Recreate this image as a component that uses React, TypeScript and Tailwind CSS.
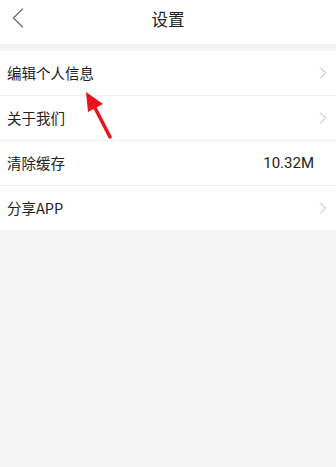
import { ChevronLeft, ChevronRight } from "lucide-react";

const font = { fontFamily: '"Noto Sans CJK SC", "Noto Sans", sans-serif' };

const rows = [
  { label: "编辑个人信息", arrow: true },
  { label: "关于我们", arrow: true },
  { label: "清除缓存", value: "10.32M" },
  { label: "分享APP", arrow: true },
];

export default function App() {
  return (
    <div
      className="relative h-[467px] w-[336px] overflow-hidden bg-[#f5f5f5] text-[#1a1a1a]"
      style={font}
    >
      {/* Header */}
      <div className="relative flex h-[44px] items-center justify-center bg-white pb-[5px]">
        <ChevronLeft
          className="absolute left-0 top-0 h-[36px] w-[36px] text-[#707070]"
          strokeWidth={0.9}
        />
        <span className="text-[16.5px] leading-none text-[#222]">设置</span>
      </div>
      <div className="h-[7px] bg-gradient-to-b from-[#f0f0f0] to-[#f7f7f7]" />

      {/* List */}
      <div className="bg-white">
        {rows.map((row, i) => (
          <div key={row.label}>
            {i > 0 && <div className="h-px bg-[#efefef]" />}
            <div className="flex h-[44px] items-center justify-between pl-[7px] pr-[3px]">
              <span className="text-[14.5px] leading-none text-[#222]">{row.label}</span>
              {row.arrow && (
                <ChevronRight className="h-[20px] w-[20px] text-[#aaa]" strokeWidth={1.1} />
              )}
              {row.value && (
                <span
                  className="mr-[19px] text-[15px] leading-none text-[#222]"
                  style={{ fontFamily: '"Roboto", "Noto Sans", sans-serif' }}
                >
                  {row.value}
                </span>
              )}
            </div>
          </div>
        ))}
      </div>

      {/* Annotation arrow */}
      <svg
        className="absolute left-0 top-0"
        width="336"
        height="467"
        viewBox="0 0 336 467"
      >
        <line x1="110" y1="137" x2="94" y2="106" stroke="#e8141d" strokeWidth="3.5" strokeLinecap="round" />
        <polygon points="86,92 103,104 88,112" fill="#e8141d" />
      </svg>
    </div>
  );
}
